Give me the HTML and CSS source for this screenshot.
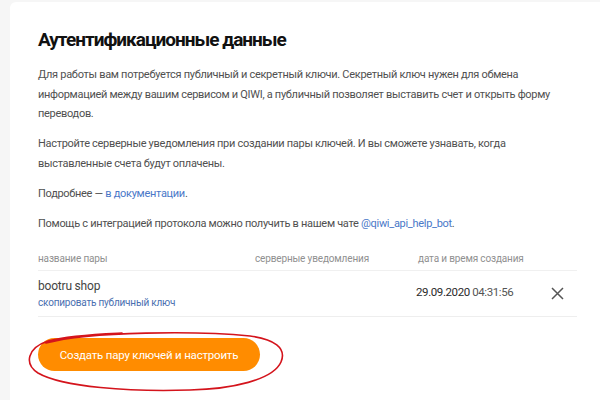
FILE: index.html
```html
<!DOCTYPE html>
<html lang="ru">
<head>
<meta charset="utf-8">
<link rel="stylesheet" href="styles.css">
</head>
<body>
<div class="card">
  <h1 class="title">Аутентификационные данные</h1>
  <p class="text">Для работы вам потребуется публичный и секретный ключи. Секретный ключ нужен для обмена информацией между вашим сервисом и QIWI, а публичный позволяет выставить счет и открыть форму переводов.</p>
  <p class="text">Настройте серверные уведомления при создании пары ключей. И вы сможете узнавать, когда выставленные счета будут оплачены.</p>
  <p class="text">Подробнее — <a class="link" href="#">в документации</a>.</p>
  <p class="text">Помощь с интеграцией протокола можно получить в нашем чате <a class="link" href="#">@qiwi_api_help_bot</a>.</p>
  <div class="table">
    <div class="row head">
      <div class="cell">название пары</div>
      <div class="cell">серверные уведомления</div>
      <div class="cell">дата и время создания</div>
      <div class="cell"></div>
    </div>
    <div class="row body">
      <div class="cell name">
        <div class="pair">bootru shop</div>
        <a class="copy" href="#">скопировать публичный ключ</a>
      </div>
      <div class="cell"></div>
      <div class="cell date"><span class="d">29.09.2020</span> <span class="t">04:31:56</span></div>
      <div class="cell close">
        <svg width="13" height="13" viewBox="0 0 13 13"><path d="M1 1 L12 12 M12 1 L1 12" stroke="#555" stroke-width="1.5" fill="none"/></svg>
      </div>
    </div>
  </div>
  <button class="btn">Создать пару ключей и настроить</button>
</div>
<svg class="mark" width="600" height="400" viewBox="0 0 600 400">
  <path d="M 46 343 C 90 331, 200 331, 250 336 C 274 339, 287 348, 281 362 C 273 380, 232 389, 190 390 C 130 392, 62 387, 38 373 C 24 364, 27 348, 48 341 C 70 335, 100 334, 122 333" fill="none" stroke="#d4141c" stroke-width="1.6" stroke-linecap="round"/>
</svg>
</body>
</html>
```

FILE: styles.css
```css
html, body {
  margin: 0;
  padding: 0;
}
body {
  background: #f6f6f6;
  font-family: Roboto, "Noto Sans", sans-serif;
  width: 600px;
  height: 400px;
  overflow: hidden;
  position: relative;
}
.card {
  margin: 2px 0 0 10px;
  background: #fff;
  border-radius: 6px 0 0 0;
  padding: 25px 23px 40px 28px;
  height: 400px;
  box-sizing: border-box;
}
.title {
  margin: 0 0 12px 0;
  font-size: 19px;
  font-weight: 700;
  color: #111;
  line-height: 26px;
  letter-spacing: -1px;
}
.text {
  margin: 0 0 10.5px 0;
  font-size: 11px;
  line-height: 19.5px;
  color: #505050;
  letter-spacing: -0.3px;
}
.link {
  color: #4a78c8;
  text-decoration: none;
}
.table {
  margin-top: 13px;
  width: 539px;
}
.row {
  display: grid;
  grid-template-columns: 217px 163px 133px 1fr;
  align-items: center;
}
.head {
  font-size: 10px;
  letter-spacing: -0.15px;
  color: #909090;
  height: 24px;
  border-bottom: 1px solid #f0f0f0;
}
.body {
  height: 45px;
  border-bottom: 1px solid #eeeeee;
}
.pair {
  font-size: 12px;
  letter-spacing: -0.2px;
  color: #444;
  line-height: 18px;
}
.copy {
  font-size: 10px;
  letter-spacing: -0.2px;
  color: #4a6fb0;
  text-decoration: none;
  line-height: 16px;
  display: block;
}
.date {
  font-size: 11.5px;
  letter-spacing: -0.4px;
  margin-top: -4px;
  margin-left: -2px;
}
.date .d {
  color: #2a2a2a;
}
.date .t {
  color: #555;
}
.close {
  display: flex;
  align-items: center;
  justify-content: flex-start;
}
.close svg {
  display: block;
}
.btn {
  margin-top: 21px;
  width: 222px;
  height: 33px;
  border: none;
  border-radius: 17px;
  background: #ff8c00;
  color: #fff;
  font-family: Roboto, "Noto Sans", sans-serif;
  font-size: 11.5px;
  letter-spacing: -0.2px;
  padding: 0;
}
.mark {
  position: absolute;
  left: 0;
  top: 0;
  pointer-events: none;
}
```
